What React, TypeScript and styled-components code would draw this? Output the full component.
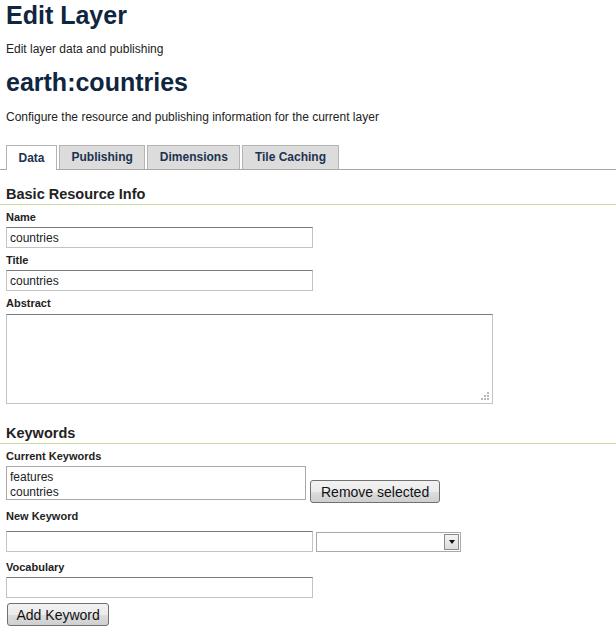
import React from 'react';
import styled, { createGlobalStyle } from 'styled-components';

const GlobalStyle = createGlobalStyle`
  html, body {
    margin: 0;
    padding: 0;
    background: #fff;
  }
  body {
    font-family: "Liberation Sans", Arial, sans-serif;
    color: #222;
  }
`;

const Page = styled.div`
  padding: 0 0 0 6px;
`;

const PageTitle = styled.h1`
  margin: 0;
  padding-top: 1px;
  font-size: 25px;
  line-height: 28px;
  font-weight: bold;
  color: #0f2540;
`;

const Lead = styled.p<{ $gap?: number }>`
  margin: ${({ $gap }) => $gap ?? 12}px 0 0;
  font-size: 12px;
  line-height: 14px;
  color: #222;
`;

const LayerName = styled.h2`
  margin: 12px 0 0;
  font-size: 25px;
  line-height: 28px;
  font-weight: bold;
  color: #0f2540;
`;

const TabBar = styled.ul`
  display: flex;
  gap: 2px;
  list-style: none;
  margin: 21px 0 0 -6px;
  padding: 0 0 0 6px;
  border-bottom: 1px solid #a8a8a8;
`;

const Tab = styled.li<{ $active?: boolean }>`
  box-sizing: border-box;
  height: ${({ $active }) => ($active ? '25px' : '24px')};
  margin-bottom: ${({ $active }) => ($active ? '-1px' : '0')};
  padding: 0 11.5px 1px;
  display: flex;
  align-items: center;
  font-size: 12px;
  font-weight: bold;
  color: #1c3350;
  background: ${({ $active }) => ($active ? '#fff' : '#dcdcdc')};
  border: 1px solid #b4b4b4;
  border-bottom: none;
`;

const SectionTitle = styled.h3<{ $gap: number }>`
  margin: ${({ $gap }) => $gap}px 0 0 -6px;
  padding: 0 0 1px 6px;
  font-size: 14.5px;
  line-height: 17px;
  font-weight: bold;
  color: #222;
  border-bottom: 1px solid #c5dda0;
`;

const Label = styled.label<{ $gap?: number }>`
  display: block;
  margin: ${({ $gap }) => $gap ?? 6}px 0 0;
  font-size: 11px;
  line-height: 13px;
  font-weight: bold;
  color: #222;
`;

const field = `
  display: block;
  box-sizing: border-box;
  border: 1px solid #c3c3c3;
  border-top-color: #7a7a7a;
  background: #fff;
  font-family: "Liberation Sans", Arial, sans-serif;
  font-size: 12px;
  color: #222;
  outline: none;
`;

const TextInput = styled.input<{ $gap?: number }>`
  ${field}
  width: 307px;
  height: 21px;
  margin-top: ${({ $gap }) => $gap ?? 3}px;
  padding: 1px 3px;
`;

const AreaWrap = styled.div`
  position: relative;
  width: 487px;
  margin-top: 4px;
`;

const AbstractArea = styled.textarea`
  ${field}
  width: 487px;
  height: 90px;
  margin: 0;
  resize: none;
`;

const Grip = styled.svg`
  position: absolute;
  right: 4px;
  bottom: 4px;
`;

const Row = styled.div<{ $align?: string }>`
  display: flex;
  align-items: ${({ $align }) => $align ?? 'flex-start'};
  gap: 3px;
  margin-top: 3px;
`;

const KeywordList = styled.div`
  box-sizing: border-box;
  width: 300px;
  height: 34px;
  border: 1px solid #a9a9a9;
  padding: 3px 3px 0;
  font-size: 12px;
  line-height: 15px;
  color: #222;
`;

const Button = styled.button<{ $gap?: number }>`
  box-sizing: border-box;
  height: 23px;
  margin-top: ${({ $gap }) => $gap ?? 0}px;
  padding: 0 9px;
  border: 1px solid #707070;
  border-radius: 3px;
  background: linear-gradient(#f2f2f2 0%, #ebebeb 50%, #dddddd 51%, #cfcfcf 100%);
  font-family: "Liberation Sans", Arial, sans-serif;
  font-size: 14px;
  color: #111;
`;

const RemoveButton = styled(Button)`
  margin: 0 0 -3px 1px;
  padding: 0 10px;
`;

const AddButton = styled(Button)`
  margin-left: 1px;
  padding: 0 8.5px;
`;

const SelectBox = styled.div`
  position: relative;
  box-sizing: border-box;
  width: 145px;
  height: 20px;
  margin-top: 6px;
  border: 1px solid #a9a9a9;
  background: #fff;
`;

const SelectArrow = styled.span`
  position: absolute;
  top: 1px;
  right: 1px;
  width: 15px;
  height: 16px;
  box-sizing: border-box;
  border: 1px solid #8a8a8a;
  background: linear-gradient(#f4f4f4, #dcdcdc);
  display: flex;
  align-items: center;
  justify-content: center;
  &::after {
    content: '';
    border-left: 3px solid transparent;
    border-right: 3px solid transparent;
    border-top: 4px solid #111;
  }
`;

export default function App() {
  return (
    <>
      <GlobalStyle />
      <Page>
        <PageTitle>Edit Layer</PageTitle>
        <Lead $gap={13}>Edit layer data and publishing</Lead>
        <LayerName>earth:countries</LayerName>
        <Lead $gap={14}>Configure the resource and publishing information for the current layer</Lead>

        <TabBar>
          <Tab $active>Data</Tab>
          <Tab>Publishing</Tab>
          <Tab>Dimensions</Tab>
          <Tab>Tile Caching</Tab>
        </TabBar>

        <SectionTitle $gap={16}>Basic Resource Info</SectionTitle>
        <Label $gap={6}>Name</Label>
        <TextInput defaultValue="countries" />
        <Label>Title</Label>
        <TextInput defaultValue="countries" />
        <Label>Abstract</Label>
        <AreaWrap>
          <AbstractArea />
          <Grip width="9" height="9" viewBox="0 0 9 9">
            <g fill="#b8b8b8">
              <rect x="7" y="1" width="2" height="2" />
              <rect x="4" y="4" width="2" height="2" />
              <rect x="7" y="4" width="2" height="2" />
              <rect x="1" y="7" width="2" height="2" />
              <rect x="4" y="7" width="2" height="2" />
              <rect x="7" y="7" width="2" height="2" />
            </g>
          </Grip>
        </AreaWrap>

        <SectionTitle $gap={21}>Keywords</SectionTitle>
        <Label $gap={6}>Current Keywords</Label>
        <Row $align="flex-end">
          <KeywordList>
            <div>features</div>
            <div>countries</div>
          </KeywordList>
          <RemoveButton>Remove selected</RemoveButton>
        </Row>
        <Label $gap={10}>New Keyword</Label>
        <Row>
          <TextInput $gap={5} />
          <SelectBox>
            <SelectArrow />
          </SelectBox>
        </Row>
        <Label $gap={9}>Vocabulary</Label>
        <TextInput />
        <AddButton $gap={5}>Add Keyword</AddButton>
      </Page>
    </>
  );
}
